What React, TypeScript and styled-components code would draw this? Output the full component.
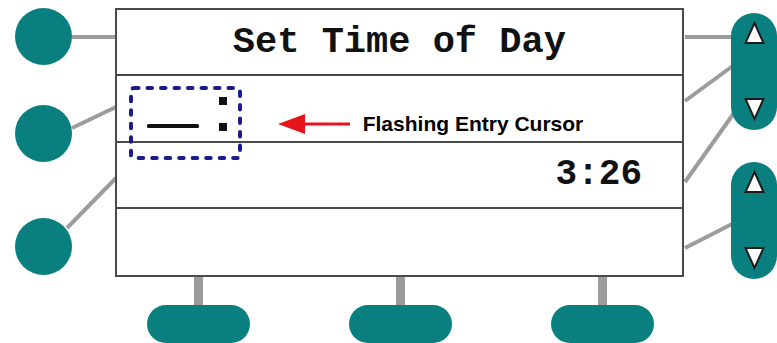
import React from 'react';
import styled, { createGlobalStyle } from 'styled-components';

const GlobalStyle = createGlobalStyle`
  html, body {
    margin: 0;
    padding: 0;
    background: #ffffff;
  }
`;

const TEAL = '#0a7f7f';
const WIRE = '#9c9c9c';

// wires between the keys and the screen (x1, y1, x2, y2)
const wires = [
  [72, 37, 116, 37],
  [72, 128, 116, 107],
  [67, 228, 116, 178],
  [685, 37, 734, 37],
  [685, 101, 734, 65],
  [685, 182, 734, 113],
  [685, 248, 734, 223],
];

const Triangle = ({ down }: { down?: boolean }) => (
  <svg width="21" height="24" viewBox="0 0 21 24">
    <polygon
      points={down ? '1.5,2 19.5,2 10.5,22' : '10.5,2 19.5,22 1.5,22'}
      fill="#ffffff"
      stroke="#1c1c1c"
      strokeWidth="2"
      strokeLinejoin="miter"
    />
  </svg>
);

const RockerKey = ({ offset }: { offset: number }) => (
  <Rocker $offset={offset}>
    <Triangle />
    <Triangle down />
  </Rocker>
);

const SoftKey = () => (
  <SoftKeyWrap>
    <Stem />
    <SoftCap />
  </SoftKeyWrap>
);

const CursorGraphic = () => (
  <CursorBox width="114" height="75" viewBox="0 0 114 75">
    <rect
      x="2"
      y="2"
      width="109"
      height="70"
      rx="3"
      fill="none"
      stroke="#1b1b8c"
      strokeWidth="4"
      strokeDasharray="4.5 9"
      strokeLinecap="round"
    />
    <rect x="18" y="38" width="52" height="4" rx="1.5" fill="#111" />
    <rect x="90" y="11" width="8" height="8" fill="#111" />
    <rect x="90" y="37" width="8" height="8" fill="#111" />
  </CursorBox>
);

function App() {
  return (
    <>
      <GlobalStyle />
      <Stage>
        <Wires width="777" height="343">
          {wires.map(([x1, y1, x2, y2], i) => (
            <line key={i} x1={x1} y1={y1} x2={x2} y2={y2} stroke={WIRE} strokeWidth="4" />
          ))}
        </Wires>

        <Top>
          <LeftKeys>
            <RoundKey $offset={0} />
            <RoundKey $offset={40} />
            <RoundKey $offset={56} />
          </LeftKeys>

          <Screen>
            <Row $align="center">
              <ScreenText $size={37}>Set Time of Day</ScreenText>
            </Row>
            <Row $align="flex-start">
              <Annotation>
                <svg width="74" height="22" viewBox="0 0 74 22">
                  <polygon points="0,11 27,1 27,21" fill="#e8141b" />
                  <rect x="24" y="9.5" width="48" height="3" fill="#e8141b" />
                </svg>
                <AnnotationText>Flashing Entry Cursor</AnnotationText>
              </Annotation>
            </Row>
            <Row $align="flex-end">
              <ScreenText $size={36}>3:26</ScreenText>
            </Row>
            <Row $align="center" />
            <CursorGraphic />
          </Screen>

          <RightKeys>
            <RockerKey offset={5} />
            <RockerKey offset={32} />
          </RightKeys>
        </Top>

        <BottomKeys>
          <SoftKey />
          <SoftKey />
          <SoftKey />
        </BottomKeys>
      </Stage>
    </>
  );
}

export default App;

const Stage = styled.div`
  position: relative;
  width: 777px;
  height: 343px;
  padding-top: 8px;
  box-sizing: border-box;
  overflow: hidden;
  background: #ffffff;
`;

const Wires = styled.svg`
  position: absolute;
  left: 0;
  top: 0;
  pointer-events: none;
`;

const Top = styled.div`
  position: relative;
  display: flex;
  align-items: flex-start;
  height: 269px;
`;

const LeftKeys = styled.div`
  display: flex;
  flex-direction: column;
  width: 115px;
  padding-left: 15px;
  box-sizing: border-box;
`;

const RoundKey = styled.div<{ $offset: number }>`
  width: 57px;
  height: 57px;
  margin-top: ${p => p.$offset}px;
  border-radius: 50%;
  background: ${TEAL};
`;

const Screen = styled.div`
  position: relative;
  width: 571px;
  height: 269px;
  box-sizing: border-box;
  border: 2px solid #4a4a4a;
  background: #ffffff;
  display: grid;
  grid-template-rows: repeat(4, 1fr);
`;

const Row = styled.div<{ $align: string }>`
  display: flex;
  align-items: center;
  justify-content: ${p => p.$align};
  padding: 0 40px 0 0;
  border-bottom: 2px solid #4a4a4a;

  &:nth-child(4) {
    border-bottom: none;
  }

  &:nth-child(2) {
    align-items: flex-end;
    padding-bottom: 5px;
  }

  &:first-child {
    padding: 0;
  }
`;

const ScreenText = styled.div<{ $size: number }>`
  font-family: "Liberation Mono", "Courier New", monospace;
  font-weight: bold;
  font-size: ${p => p.$size}px;
  line-height: 1;
  color: #111111;
`;

const Annotation = styled.div`
  display: flex;
  align-items: center;
  gap: 11px;
  margin-left: 161px;
`;

const AnnotationText = styled.span`
  font-family: "Liberation Sans", Arial, sans-serif;
  font-weight: bold;
  font-size: 21px;
  letter-spacing: 0;
  color: #000000;
`;

const CursorBox = styled.svg`
  position: absolute;
  left: 12px;
  top: 76px;
`;

const RightKeys = styled.div`
  display: flex;
  flex-direction: column;
  padding-left: 47px;
`;

const Rocker = styled.div<{ $offset: number }>`
  display: flex;
  flex-direction: column;
  justify-content: space-between;
  align-items: center;
  width: 46px;
  height: 117px;
  margin-top: ${p => p.$offset}px;
  padding: 8px 0 9px;
  box-sizing: border-box;
  border-radius: 23px;
  background: ${TEAL};
`;

const BottomKeys = styled.div`
  display: flex;
  gap: 99px;
  padding-left: 147px;
`;

const SoftKeyWrap = styled.div`
  display: flex;
  flex-direction: column;
  align-items: center;
`;

const Stem = styled.div`
  width: 9px;
  height: 28px;
  background: ${WIRE};
`;

const SoftCap = styled.div`
  width: 103px;
  height: 38px;
  border-radius: 19px;
  background: ${TEAL};
`;
